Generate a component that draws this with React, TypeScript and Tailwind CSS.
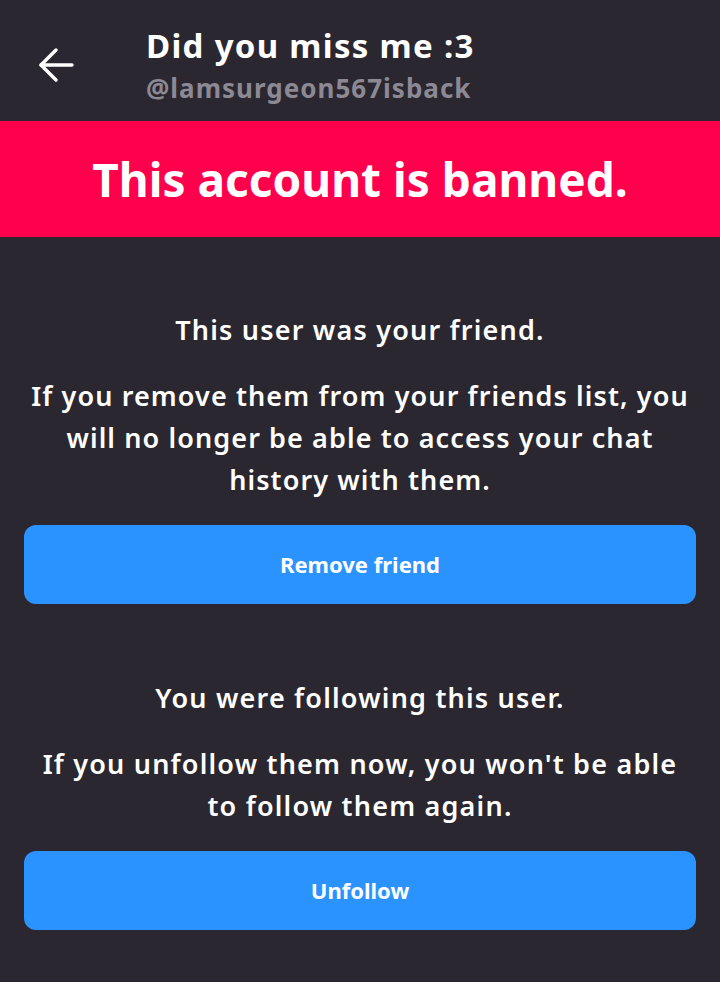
import React from 'react';

const App: React.FC = () => {
  return (
    <div className="min-h-[982px] w-[720px] bg-[#2a2730] text-white font-['Noto_Sans','Open_Sans',sans-serif]">
      <header className="flex h-[121px] pl-[32px]">
        <button className="w-[48px] h-[48px] flex items-center justify-center text-white mt-[41px]">
          <svg className="w-[48px] h-[48px]" viewBox="0 0 24 24" fill="none" stroke="currentColor" strokeWidth="1.7" strokeLinecap="round" strokeLinejoin="round">
            <path d="M20 12H4.5" />
            <path d="M12 4.5l-7.5 7.5 7.5 7.5" />
          </svg>
        </button>
        <div className="ml-[66px] pt-[26px] flex flex-col">
          <h1 className="text-[33px] leading-[40px] font-bold tracking-[1.3px]">Did you miss me :3</h1>
          <p className="mt-[6px] text-[26px] leading-[32px] font-bold tracking-[1px] text-[#8c8995]">@lamsurgeon567isback</p>
        </div>
      </header>

      <div className="h-[116px] bg-[#ff004d] flex items-center justify-center">
        <h2 className="text-[46px] font-bold">This account is banned.</h2>
      </div>

      <section className="px-[24px] pt-[72px] text-center">
        <p className="text-[27px] leading-[42px] font-semibold tracking-[1.2px]">This user was your friend.</p>
        <p className="mt-[24px] -mx-[2px] text-[27px] leading-[42px] font-semibold tracking-[1.1px]">
          If you remove them from your friends list, you will no longer be able to access your chat history with them.
        </p>
        <button className="mt-[24px] w-full h-[79px] rounded-[12px] bg-[#2a93ff] text-[22px] font-bold">
          Remove friend
        </button>

        <p className="mt-[73px] text-[27px] leading-[42px] font-semibold tracking-[1.2px]">You were following this user.</p>
        <p className="mt-[24px] text-[27px] leading-[42px] font-semibold tracking-[1.2px] px-[4px]">
          If you unfollow them now, you won't be able to follow them again.
        </p>
        <button className="mt-[24px] w-full h-[79px] rounded-[12px] bg-[#2a93ff] text-[22px] font-bold">
          Unfollow
        </button>
      </section>
    </div>
  );
};

export default App;
